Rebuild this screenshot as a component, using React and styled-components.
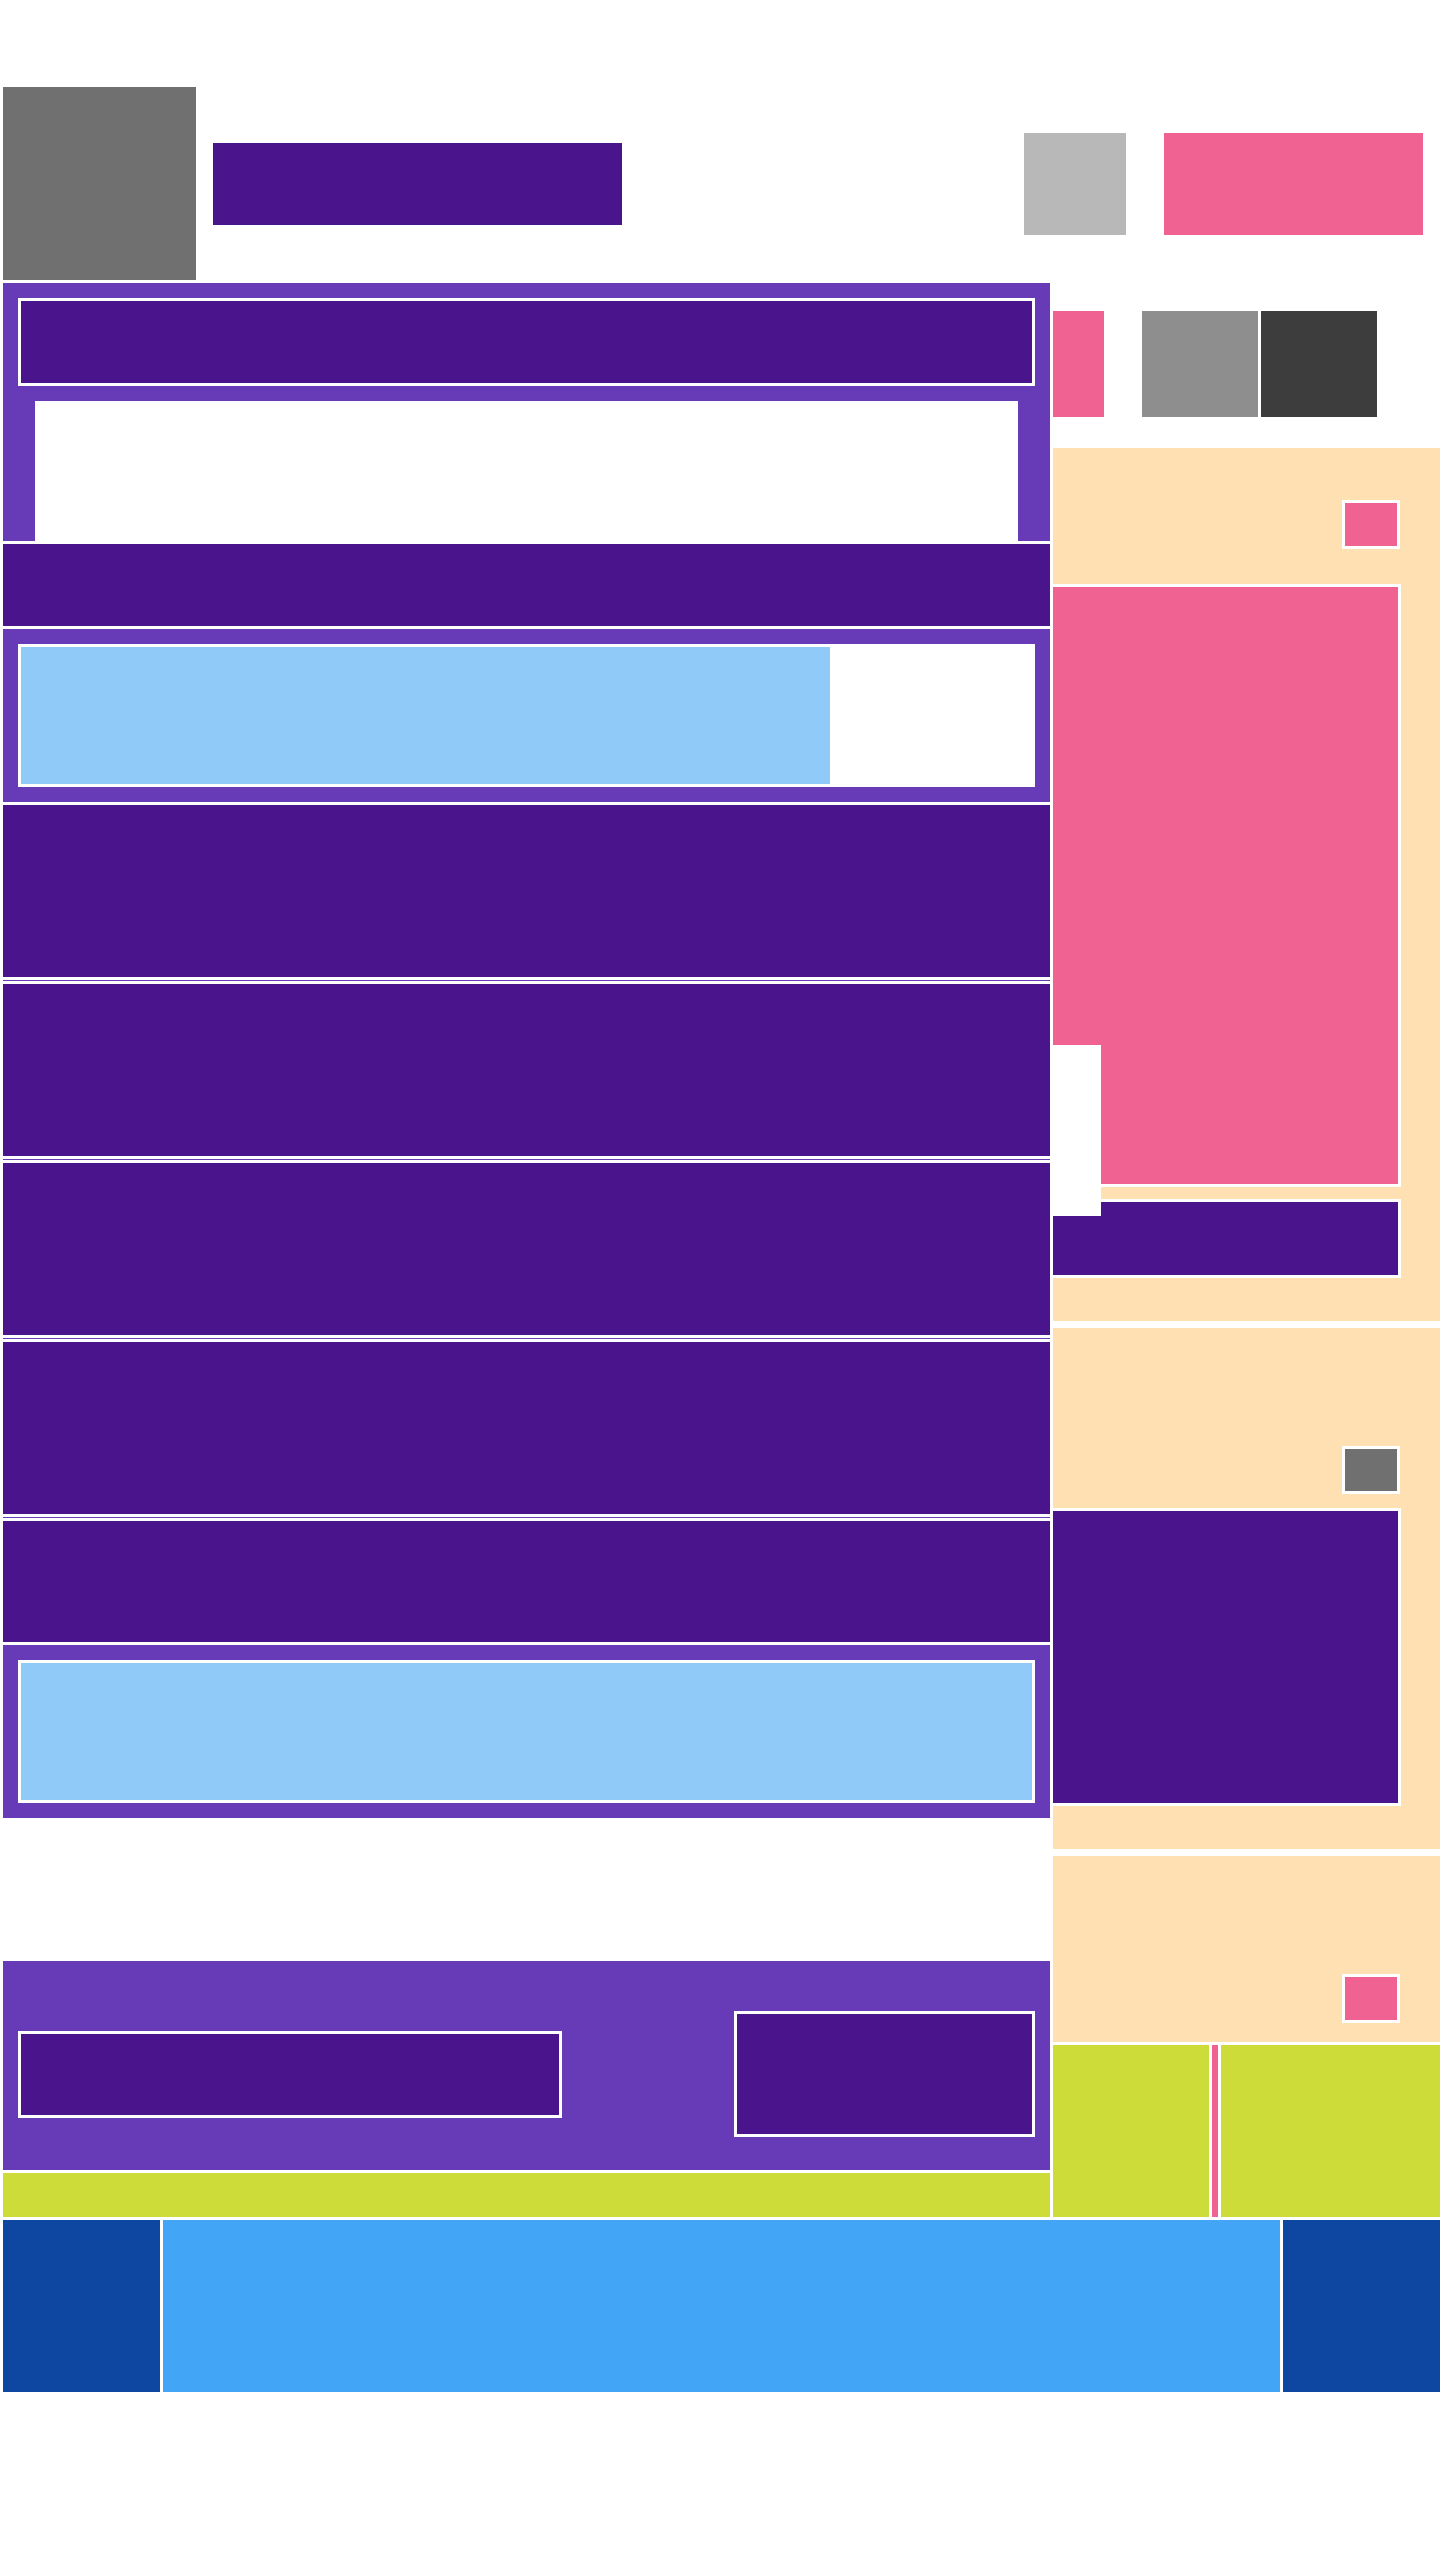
import React from 'react';
import styled, { createGlobalStyle } from 'styled-components';

const GlobalStyle = createGlobalStyle`
  html, body {
    margin: 0;
    padding: 0;
    background: #ffffff;
    font-family: "Liberation Sans", Arial, sans-serif;
  }
  * {
    box-sizing: border-box;
  }
`;

const colors = {
  deep: '#4a148c',
  purple: '#673ab7',
  sky: '#90caf9',
  pink: '#f06292',
  peach: '#ffe0b2',
  lime: '#cddc39',
  navy: '#0d47a1',
  blue: '#42a5f5',
};

const Page = styled.div`
  width: 1440px;
  padding: 87px 0 168px 3px;
  display: flex;
  flex-direction: column;
  gap: 3px;
`;

const Header = styled.header`
  display: flex;
  align-items: center;
  padding-right: 17px;
`;

const Logo = styled.div`
  width: 193px;
  height: 193px;
  background: #707070;
`;

const Title = styled.div`
  width: 409px;
  height: 82px;
  margin-left: 17px;
  background: ${colors.deep};
`;

const HeaderActions = styled.div`
  margin-left: auto;
  display: flex;
  gap: 38px;
`;

const Avatar = styled.div`
  width: 102px;
  height: 102px;
  background: #b8b8b8;
`;

const CtaButton = styled.div`
  width: 259px;
  height: 102px;
  background: ${colors.pink};
`;

const Main = styled.div`
  display: grid;
  grid-template-columns: 1047px 387px;
  gap: 3px;
`;

const LeftColumn = styled.div`
  display: flex;
  flex-direction: column;
  gap: 3px;
`;

const Panel = styled.section`
  background: ${colors.purple};
  padding: ${({ $pad }) => $pad || '15px'};
  display: flex;
  flex-direction: ${({ $row }) => ($row ? 'row' : 'column')};
  align-items: ${({ $row }) => ($row ? 'center' : 'stretch')};
  justify-content: space-between;
  gap: 15px;
`;

const Framed = styled.div`
  border: 3px solid #ffffff;
  background: ${({ $bg }) => $bg || colors.deep};
  height: ${({ $h }) => $h}px;
  width: ${({ $w }) => ($w ? `${$w}px` : 'auto')};
  display: flex;
`;

const Blank = styled.div`
  background: #ffffff;
  height: 140px;
  margin: 0 17px;
`;

const Bar = styled.div`
  background: ${({ $bg }) => $bg || colors.deep};
  height: ${({ $h }) => $h}px;
`;

const Divider = styled.div`
  height: 1px;
  background: ${colors.purple};
`;

const Spacer = styled.div`
  height: 137px;
`;

const Fill = styled.div`
  background: ${colors.sky};
  height: 100%;
`;

const RightColumn = styled.aside`
  display: flex;
  flex-direction: column;
`;

const Toolbar = styled.div`
  display: flex;
  margin: 28px 0 31px;
  height: 106px;
`;

const ToolPink = styled.div`
  width: 51px;
  background: ${colors.pink};
  margin-right: 38px;
`;

const ToolGrey = styled.div`
  width: 116px;
  background: ${({ $bg }) => $bg};
  margin-right: 3px;
`;

const Card = styled.div`
  position: relative;
  background: ${colors.peach};
  height: ${({ $h }) => $h}px;
  padding: ${({ $top }) => $top}px 39px 0 0;
  margin-bottom: ${({ $mb }) => $mb}px;
  display: flex;
  flex-direction: column;
  align-items: stretch;
`;

const Chip = styled.div`
  align-self: flex-end;
  width: 58px;
  height: ${({ $h }) => $h || 49}px;
  border: 3px solid #ffffff;
  background: ${({ $bg }) => $bg || colors.pink};
  margin-right: 1px;
`;

const Block = styled.div`
  border: 3px solid #ffffff;
  border-left: none;
  background: ${({ $bg }) => $bg};
  height: ${({ $h }) => $h}px;
  margin-top: ${({ $mt }) => $mt}px;
`;

const Overlay = styled.div`
  position: absolute;
  left: 0;
  top: 597px;
  width: 48px;
  height: 171px;
  background: #ffffff;
`;

const TagRow = styled.div`
  display: flex;
  gap: 3px;
  height: 172px;
`;

const Tag = styled.div`
  background: ${({ $bg }) => $bg};
  width: ${({ $w }) => ($w ? `${$w}px` : 'auto')};
  flex: ${({ $w }) => ($w ? 'none' : 1)};
`;

const Footer = styled.footer`
  display: flex;
  gap: 3px;
  height: 172px;
`;

const FootBlock = styled.div`
  background: ${({ $bg }) => $bg};
  width: ${({ $w }) => ($w ? `${$w}px` : 'auto')};
  flex: ${({ $w }) => ($w ? 'none' : 1)};
`;

const progress = 80;

export default function App() {
  return (
    <>
      <GlobalStyle />
      <Page>
        <Header>
          <Logo />
          <Title />
          <HeaderActions>
            <Avatar />
            <CtaButton />
          </HeaderActions>
        </Header>

        <Main>
          <LeftColumn>
            <Panel $pad="15px 15px 0">
              <Framed $h={88} />
              <Blank />
            </Panel>
            <Bar $h={82} />
            <Panel>
              <Framed $h={143} $bg="#ffffff">
                <Fill style={{ width: `${progress}%` }} />
              </Framed>
            </Panel>
            <Bar $h={172} />
            <Divider />
            <Bar $h={172} />
            <Divider />
            <Bar $h={172} />
            <Divider />
            <Bar $h={172} />
            <Divider />
            <Bar $h={121} />
            <Panel>
              <Framed $h={143} $bg={colors.sky} />
            </Panel>
            <Spacer />
            <Panel $row $pad="50px 15px 33px">
              <Framed $h={87} $w={544} />
              <Framed $h={126} $w={301} />
            </Panel>
            <Bar $h={44} $bg={colors.lime} />
          </LeftColumn>

          <RightColumn>
            <Toolbar>
              <ToolPink />
              <ToolGrey $bg="#8e8e8e" />
              <ToolGrey $bg="#3d3d3d" />
            </Toolbar>
            <Card $h={873} $top={52} $mb={7}>
              <Chip />
              <Block $bg={colors.pink} $h={603} $mt={35} />
              <Block $bg={colors.deep} $h={79} $mt={12} />
              <Overlay />
            </Card>
            <Card $h={521} $top={118} $mb={7}>
              <Chip $h={48} $bg="#707070" />
              <Block $bg={colors.deep} $h={298} $mt={14} />
            </Card>
            <Card $h={186} $top={118} $mb={3}>
              <Chip />
            </Card>
            <TagRow>
              <Tag $bg={colors.lime} $w={156} />
              <Tag $bg={colors.pink} $w={6} />
              <Tag $bg={colors.lime} />
            </TagRow>
          </RightColumn>
        </Main>

        <Footer>
          <FootBlock $bg={colors.navy} $w={157} />
          <FootBlock $bg={colors.blue} />
          <FootBlock $bg={colors.navy} $w={157} />
        </Footer>
      </Page>
    </>
  );
}
